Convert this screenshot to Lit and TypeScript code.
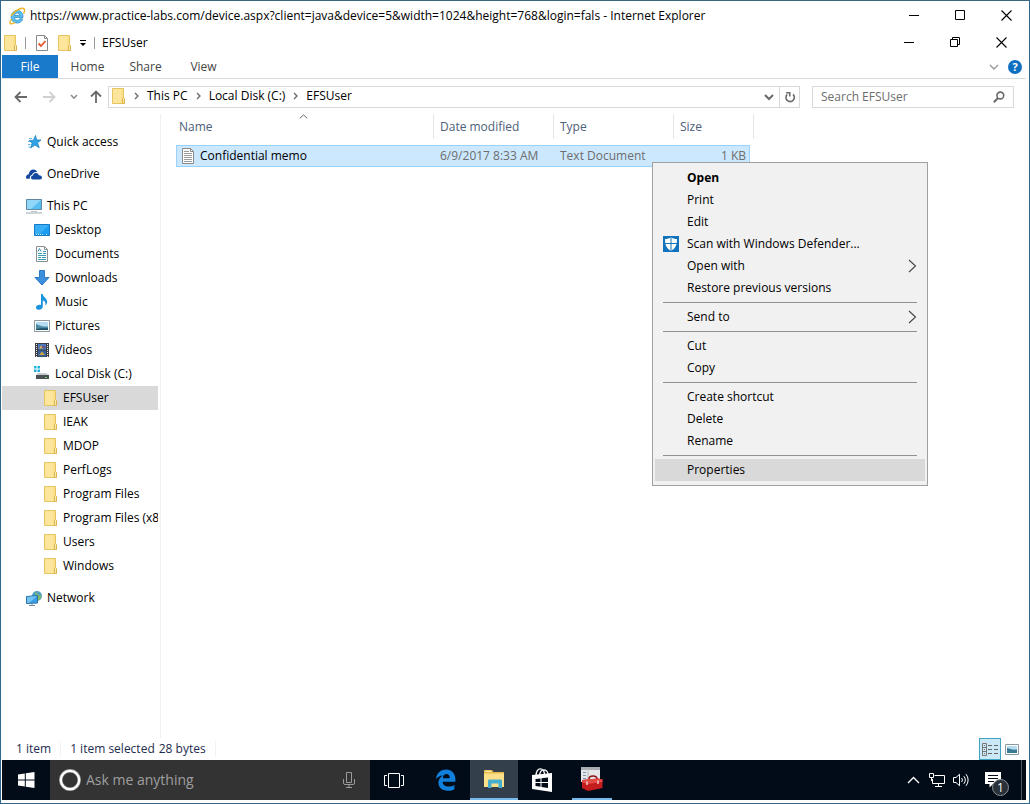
import { LitElement, html, css, svg, nothing, type TemplateResult } from "lit";
import { customElement } from "lit/decorators.js";
import { classMap } from "lit/directives/class-map.js";

const icon = (w: number, h: number, body: TemplateResult) =>
  html`<svg class="icon" width=${w} height=${h} viewBox="0 0 ${w} ${h}" fill="none" aria-hidden="true">${body}</svg>`;

const folder = () => icon(16, 16, svg`
  <path d="M2.5 .5H13.5V9.5L14.5 10.5V15.5H2.5Z" fill="#fbe08c" stroke="#e6c460"/>
  <path d="M3 1H11V15H3Z" fill="#fde69c"/>
  <path d="M12.5 15.5V10.5L13.5 9.5L14.5 10.5V15.5Z" fill="#ffeeb0" stroke="#dcb34c"/>`);

const textFile = () => icon(14, 16, svg`
  <path d="M1.5 .5H9.5L12.5 3.5V15.5H1.5Z" fill="#fff" stroke="#8a8a8a"/>
  <path d="M9.5 .5V3.5H12.5" stroke="#8a8a8a"/>
  <path d="M3 5.5H11M3 7.5H11M3 9.5H11M3 11.5H11M3 13.5H11M3 3.5H8" stroke="#9a9a9a"/>`);

const star = () => icon(16, 16, svg`
  <path d="M9.5 1.5L10.6 6H15L11.5 8.8L13.2 13.8L9 11L4.6 14L6.2 9L3 6.4H7.4Z" fill="#2ea3e6" stroke="#1d82c4" stroke-width=".8"/>
  <path d="M3 4.5H6M2 7.5H4M2 10.5H4.5M2.5 13H4" stroke="#5db8ec"/>`);

const cloud = () => icon(16, 16, svg`
  <path d="M0 11.5C0 9.5 1.3 8.4 2.8 8.3C3 5.5 5 3.6 7.4 3.6C9.2 3.6 10.6 4.6 11.3 6C8.6 5.6 6.6 7 6 9C4.4 9.2 3.4 10.6 3.9 12.8H1.6C.6 12.8 0 12.3 0 11.5Z" fill="#1448a0"/>
  <path d="M5 11.6C5 10.4 5.8 9.8 6.8 9.8C7 8 8.2 6.9 9.9 6.9C11.4 6.9 12.5 7.8 12.8 9.2C14.6 9 16 10 16 11.6C16 12.8 15.2 13.6 14 13.6H7C5.7 13.6 5 12.8 5 11.6Z" fill="#1448a0"/>`);

const pc = () => icon(16, 16, svg`
  <path d="M.5 1.5H15.5V11.5H.5Z" fill="#58bdf0" stroke="#5f87a3"/>
  <path d="M1 2H15L5 11H1Z" fill="#8fd6f8"/>
  <path d="M5 13.5H11" stroke="#b7c3cc"/><path d="M0 15H16" stroke="#9aa9b4"/>`);

const desktop = () => icon(16, 16, svg`
  <path d="M.5 2.5H15.5V13.5H.5Z" fill="#1a9df0" stroke="#1679c8"/>
  <path d="M1 3H15L6 12H1Z" fill="#38aef5"/>
  <path d="M2 12.5H10M12 12.5H14" stroke="#c7e8fb" stroke-dasharray="1 1"/>`);

const documents = () => icon(16, 16, svg`
  <path d="M2.5 .5H10.5L13.5 3.5V15.5H2.5Z" fill="#fff" stroke="#8a8f93"/>
  <path d="M10.5 .5V3.5H13.5" stroke="#8a8f93"/>
  <path d="M4 5.5L5.5 2.5L7 5.5M9 5.5H12M4 7.5H8M9 7.5H12M4 9.5H12M4 11.5H7M8 11.5H12M4 13.5H12" stroke="#3a9cba"/>`);

const downloads = () => icon(16, 16, svg`
  <path d="M5.5 .5H10.5V7.5H15L8 15L1 7.5H5.5Z" fill="#3b8fdd" stroke="#2c7ac4"/>`);

const music = () => icon(16, 16, svg`
  <path d="M7 0H8.6C9 3 13.4 4.4 13.2 8C13.1 9.6 12.4 10.6 11.4 11.4C12 8.6 10.8 7.2 8.8 6.6V12.6C8.8 14.6 7 15.8 5 15.8C3.2 15.8 2 14.8 2 13.4C2 11.6 4.6 10.2 7 11Z" fill="#1c93dd"/>`);

const picture = () => icon(16, 16, svg`
  <path d="M.5 2.5H15.5V13.5H.5Z" fill="#fff" stroke="#8c98a0"/>
  <path d="M2 4H14V12H2Z" fill="#b4dcf2"/>
  <path d="M2 6C5 7 7 9 14 8.5V12H2Z" fill="#4c8aa4"/>
  <path d="M2 11C7 9.5 10 10.5 14 10V12H2Z" fill="#1e4f66"/>`);

const video = () => icon(16, 16, svg`
  <path d="M1 1H15V15H1Z" fill="#3b3f45"/>
  <path d="M2.5 2V15M13.5 2V15" stroke="#e8e8e8" stroke-dasharray="1 1"/>
  <path d="M4 2H12V7.5H4Z" fill="#4a78b8"/><path d="M4 8.5H12V14.5H4Z" fill="#35619c"/>
  <path d="M5 6.5L7 3.5L9 6.5Z" fill="#d5b54a"/><path d="M8 4H11V6H8Z" fill="#7e4a86"/>
  <path d="M5 13L8 9.5L11 13Z" fill="#c9a53e"/>`);

const drive = () => icon(16, 16, svg`
  <path d="M0 0H2.5V2.5H0ZM3.5 0H6V2.5H3.5ZM0 3.5H2.5V6H0ZM3.5 3.5H6V6H3.5Z" fill="#1fb0dc"/>
  <path d="M2 9L4 7H12L15 9Z" fill="#c6cbce"/><path d="M2 9H15V13H2Z" fill="#4a5053"/>
  <path d="M11 11.5H13" stroke="#58d84a"/>`);

const network = () => icon(16, 16, svg`
  <circle cx="11" cy="6" r="5" fill="#4e9fc4"/>
  <path d="M9 2C12 3 12 6 15.5 5.5C15 9 13 10.6 11 11Z" fill="#80b86a"/>
  <path d="M.5 6.5L11.5 5.5V13L.5 13.5Z" fill="#3aa0e6" stroke="#2a6fa8"/>
  <path d="M1 7L11 6L3 13H1Z" fill="#74c2f2"/><path d="M3 15.5H9M6 13.5V15" stroke="#6c8ca4"/>`);

const ie = () => icon(18, 18, svg`
  <path d="M14.6 11.8H11.6C11.2 12.8 10.4 13.3 9.3 13.3C7.6 13.3 6.6 12.2 6.5 10.4H15C15.2 6.4 13 3.6 9.4 3.6C5.9 3.6 3.2 6.2 3.2 9.9C3.2 13.5 5.7 16 9.2 16C12 16 13.9 14.5 14.6 11.8ZM6.6 8.4C6.8 6.9 7.8 6 9.2 6C10.7 6 11.6 6.9 11.7 8.4Z" fill="#5cc0f0" stroke="#2a8cc8" stroke-width=".8"/>
  <path d="M3.6 12.2C1.4 15.2 1.4 17 3.4 16.8C4.8 16.7 6.2 16 7.2 15.4" stroke="#e9b62c" stroke-width="1.4"/>
  <path d="M3.2 9C5 5.6 9.6 1.8 13.8 1.2C17 .8 17.4 3.4 15.6 6.6" stroke="#e9b62c" stroke-width="1.5"/>`);

const checkDoc = () => icon(16, 16, svg`
  <path d="M3.5 .5H11.5L14.5 3.5V15.5H3.5Z" fill="#fff" stroke="#8a8a8a"/>
  <path d="M11.5 .5V3.5H14.5" stroke="#8a8a8a"/>
  <path d="M5.5 8.5L8 11L12.5 6" stroke="#e0562a" stroke-width="1.8"/>`);

const customize = () => icon(8, 8, svg`<path d="M1 1.5H7" stroke="#000"/><path d="M1 4H7L4 7Z" fill="#000"/>`);
const minimize = () => icon(11, 11, svg`<path d="M0 5.5H10" stroke="#000"/>`);
const maximize = () => icon(11, 11, svg`<path d="M.5 .5H9.5V9.5H.5Z" stroke="#000"/>`);
const restore = () => icon(11, 11, svg`<path d="M.5 2.5H7.5V9.5H.5ZM2.5 2.5V.5H9.5V7.5H7.5" stroke="#000"/>`);
const close = () => icon(11, 11, svg`<path d="M.5 .5L10.5 10.5M10.5 .5L.5 10.5" stroke="#000" stroke-width="1.1"/>`);

const arrow = (color: string, d: string) => icon(14, 14, svg`<path d=${d} stroke=${color} stroke-width="1.8"/>`);
const back = "M13 7H2M6.5 2L1.5 7L6.5 12";
const forward = "M1 7H12M7.5 2L12.5 7L7.5 12";
const up = "M7 13V2M2 6.5L7 1.5L12 6.5";
const smallDown = (color: string) => icon(8, 6, svg`<path d="M1 1L4 4.2L7 1" stroke=${color} stroke-width="1.5"/>`);
const wideDown = (color: string, width: number) => icon(10, 8, svg`<path d="M1 2L5 6L9 2" stroke=${color} stroke-width=${width}/>`);
const crumb = () => icon(5, 8, svg`<path d="M1 1L4 4L1 7" stroke="#666" stroke-width="1.3"/>`);
const refresh = () => icon(12, 12, svg`
  <path d="M9 3.3A4.2 4.2 0 1 1 3.2 3.4" stroke="#6a6a6a" stroke-width="1.6"/>
  <path d="M2.2 1.8H5.8V5.6" stroke="#6a6a6a" stroke-width="1.5"/>`);
const magnifier = () => icon(12, 12, svg`
  <circle cx="7.3" cy="4.5" r="3.4" stroke="#6a6a6a" stroke-width="1.6"/><path d="M5 7L.8 11.2" stroke="#6a6a6a" stroke-width="2"/>`);
const help = () => html`<span class="help">?</span>`;
const defender = () => icon(16, 16, svg`
  <path d="M0 0H16V16H0Z" fill="#1172bd"/>
  <path d="M8 1.2C9.5 2.4 11.5 3 14 3C14 8.5 13 12 8 15C3 12 2 8.5 2 3C4.5 3 6.5 2.4 8 1.2Z" fill="#fff"/>
  <path d="M8 1V15M2 7.5H14" stroke="#1172bd"/>`);
const submenu = () => icon(9, 14, svg`<path d="M1 1L7.5 7L1 13" stroke="#444" stroke-width="1.1"/>`);
const sortUp = () => icon(9, 5, svg`<path d="M.8 4.3L4.5 .9L8.2 4.3" stroke="#666"/>`);

const winLogo = () => icon(17, 16, svg`
  <path d="M0 2.4L6.8 1.4V7.5H0ZM7.8 1.2L16.5 0V7.5H7.8ZM0 8.5H6.8V14.6L0 13.6ZM7.8 8.5H16.5V16L7.8 14.8Z" fill="#fff"/>`);
const cortana = () => icon(22, 22, svg`
  <circle cx="11" cy="11" r="9.2" stroke="#9c9c9c" stroke-width="3.4"/>
  <circle cx="11" cy="11" r="9.2" stroke="#fff" stroke-width="2.2"/>`);
const mic = () => icon(12, 16, svg`
  <path d="M3.5 .5H8.5V10.5H3.5ZM.5 7V11Q.5 12.5 2 12.5H10Q11.5 12.5 11.5 11V7M6 12.5V15.5M3 15.5H9" stroke="#9a9a9a"/>`);
const taskView = () => icon(20, 15, svg`
  <path d="M4.5 .5H15.5V14.5H4.5ZM3 2.5H.5V12.5H3M17 2.5H19.5V12.5H17" stroke="#fff"/>`);
const edge = () => icon(22, 22, svg`
  <path d="M1 10.2C1.6 4.6 5.4 .6 11 .6C17 .6 20.4 5 20.4 10.4V12.8H7.6C7.8 16 10.4 17.6 13.6 17.6C16 17.6 17.8 17 19.4 16V20.2C17.6 21.2 15.4 21.8 12.6 21.8C7 21.8 3.4 18.6 3.4 13.6C3.4 10.4 5.2 7.8 8 6.4C4.8 6.6 2.6 8 1 10.2ZM7.8 9.2H14.8C14.8 6.6 13.6 5 11.4 5C9.2 5 8 7 7.8 9.2Z" fill="#1180dc"/>`);
const explorer = () => icon(22, 20, svg`
  <path d="M1 1H9L10.5 3H21V18H1Z" fill="#e6b94e"/><path d="M1 4.5H21V18H1Z" fill="#fbe08a"/>
  <path d="M2.5 2.3H8" stroke="#fff3c6"/>
  <path d="M5 19V12C5 11 5.6 10.5 6.5 10.5H17.5C18.4 10.5 19 11 19 12V19H15.5V14.5H8.5V19Z" fill="#48aece"/>`);
const store = () => icon(22, 24, svg`
  <path d="M1 7L21 5V24L1 21Z" fill="#fff"/>
  <path d="M5 8C5 3 7 .8 9.4 .8S13.4 3 13.6 7M8.5 7.5C9 3.4 10.6 1.8 12.8 1.8S16.6 3.6 17 6" stroke="#fff" stroke-width="1.3"/>
  <path d="M4.5 11L9.5 10.4V14H4.5ZM10.5 10.2L17 9.4V14H10.5ZM4.5 15H9.5V18.8L4.5 18.1ZM10.5 15H17V20L10.5 19Z" fill="#020c18"/>`);
const toolbox = () => icon(22, 24, svg`
  <path d="M0 0H19V15H0Z" fill="#e4e6e8"/><path d="M0 0H19V3H0Z" fill="#a9adb2"/>
  <path d="M2 5.5H5M2 8.5H5M2 11.5H5" stroke="#7b96b8"/><path d="M7 4V14" stroke="#b5b9bd"/>
  <path d="M8 12C8 9.4 9.4 9 12 9C14.6 9 16 9.4 16 12" stroke="#8e1414" stroke-width="1.6"/>
  <path d="M1 13L17 11.5L21.5 12.5V21L7 24L1 21Z" fill="#c41d1d"/>
  <path d="M1 13L17 11.5L21.5 12.5V15L7 17L1 15.5Z" fill="#e24a44"/>
  <path d="M6 14.5V18M17 13.5V17" stroke="#f0d8d8" stroke-width="1.4"/>`);
const trayUp = () => icon(13, 8, svg`<path d="M1 7L6.5 1.5L12 7" stroke="#fff" stroke-width="1.4"/>`);
const trayNet = () => icon(17, 15, svg`
  <path d="M5.5 2.5H15.5V10.5H3.5V6" stroke="#fff"/><path d="M.5 .5H4.5V4.5H.5ZM2.5 4.5V8" stroke="#fff"/>
  <path d="M9.5 10.5V13.5M6 13.5H13" stroke="#fff"/>`);
const traySound = () => icon(17, 14, svg`
  <path d="M.5 4.5H3L6.5 1.3V12.7L3 9.5H.5Z" stroke="#fff"/>
  <path d="M8.6 5A3 3 0 0 1 8.6 9M10.8 3.2A6 6 0 0 1 10.8 10.8M13 1.2A9 9 0 0 1 13 12.8" stroke="#fff"/>`);
const bubble = () => icon(17, 16, svg`
  <path d="M0 0H16V12H8L4.5 15.5V12H0Z" fill="#fff"/><path d="M3 3.5H13M3 6.5H13M3 9.5H9" stroke="#020c18"/>`);
const detailsView = () => icon(17, 13, svg`
  <path d="M.5 .5H4.5V12.5H.5ZM.5 4.5H4.5M.5 8.5H4.5M2 2.5H3M2 6.5H3M2 10.5H3" stroke="#777"/>
  <path d="M6 2.5H10M12 2.5H16M6 6.5H10M12 6.5H16M6 10.5H10M12 10.5H16" stroke="#666"/>`);
const iconsView = () => icon(14, 11, svg`
  <path d="M.5 .5H13.5V10.5H.5Z" fill="#fff" stroke="#8c98a0"/><path d="M2 2H12V9H2Z" fill="#b4dcf2"/>
  <path d="M2 4C5 5 7 6 12 5.5V9H2Z" fill="#3b7a94"/>`);

interface TreeItem { label: string; level: number; icon: () => TemplateResult; selected?: boolean; gap?: boolean }

const tree: TreeItem[] = [
  { label: "Quick access", level: 0, icon: star },
  { label: "OneDrive", level: 0, icon: cloud, gap: true },
  { label: "This PC", level: 0, icon: pc, gap: true },
  { label: "Desktop", level: 1, icon: desktop },
  { label: "Documents", level: 1, icon: documents },
  { label: "Downloads", level: 1, icon: downloads },
  { label: "Music", level: 1, icon: music },
  { label: "Pictures", level: 1, icon: picture },
  { label: "Videos", level: 1, icon: video },
  { label: "Local Disk (C:)", level: 1, icon: drive },
  { label: "EFSUser", level: 2, icon: folder, selected: true },
  { label: "IEAK", level: 2, icon: folder },
  { label: "MDOP", level: 2, icon: folder },
  { label: "PerfLogs", level: 2, icon: folder },
  { label: "Program Files", level: 2, icon: folder },
  { label: "Program Files (x86)", level: 2, icon: folder },
  { label: "Users", level: 2, icon: folder },
  { label: "Windows", level: 2, icon: folder },
  { label: "Network", level: 0, icon: network, gap: true },
];

interface MenuItem { label: string; bold?: boolean; icon?: () => TemplateResult; sub?: boolean; hot?: boolean }

const menu: MenuItem[][] = [
  [
    { label: "Open", bold: true },
    { label: "Print" },
    { label: "Edit" },
    { label: "Scan with Windows Defender...", icon: defender },
    { label: "Open with", sub: true },
    { label: "Restore previous versions" },
  ],
  [{ label: "Send to", sub: true }],
  [{ label: "Cut" }, { label: "Copy" }],
  [{ label: "Create shortcut" }, { label: "Delete" }, { label: "Rename" }],
  [{ label: "Properties", hot: true }],
];

const base = css`
  * { box-sizing: border-box; }
  .icon { display: block; flex: none; }
  button, input { font: inherit; color: inherit; border: 0; background: none; padding: 0; margin: 0; border-radius: 0; }
  button { display: flex; align-items: center; justify-content: center; white-space: nowrap; }
  a { color: inherit; text-decoration: none; }
`;

@customElement("folder-tree")
class FolderTree extends LitElement {
  static styles = [base, css`
    :host { display: block; padding: 16px 2px 0 0; border-right: 1px solid #f0f0f0; overflow: hidden; }
    .item { display: flex; align-items: center; gap: 5px; height: 24px; padding-left: 24px; overflow: hidden; white-space: nowrap; }
    .level1 { padding-left: 32px; }
    .level2 { padding-left: 40px; }
    .gap { margin-top: 8px; }
    .selected { background: #d9d9d9; }
  `];
  render() {
    return html`<nav aria-label="Folders">${tree.map((t) => html`
      <a href="#" class=${classMap({ item: true, level1: t.level === 1, level2: t.level === 2, gap: !!t.gap, selected: !!t.selected })}>
        ${t.icon()}<span>${t.label}</span></a>`)}</nav>`;
  }
}

@customElement("context-menu")
class ContextMenu extends LitElement {
  static styles = [base, css`
    :host { display: block; width: 276px; padding: 4px 2px; border: 1px solid #a0a0a0; background: #f1f1f1; color: #000; }
    .item { display: grid; grid-template-columns: 24px 1fr 9px; width: 100%; height: 22px; padding: 0 8px; text-align: left; }
    .bold { font-weight: 700; }
    .hot { background: #d9d9d9; }
    hr { margin: 3px 8px; border: 0; border-top: 1px solid #919191; }
  `];
  render() {
    return html`<div role="menu">${menu.map((group, i) => html`
      ${i ? html`<hr>` : nothing}
      ${group.map((m) => html`
        <button role="menuitem" class=${classMap({ item: true, bold: !!m.bold, hot: !!m.hot })}>
          <span>${m.icon ? m.icon() : nothing}</span><span>${m.label}</span>${m.sub ? submenu() : nothing}
        </button>`)}`)}</div>`;
  }
}

@customElement("task-bar")
class TaskBar extends LitElement {
  static styles = [base, css`
    :host { display: flex; height: 40px; background: #020c18; color: #fff; }
    .start { width: 48px; }
    .ask { display: flex; align-items: center; width: 320px; gap: 5px; padding: 0 15px 0 9px; background: #333; }
    .ask input { flex: 1; min-width: 0; height: 24px; font-size: 14px; line-height: 24px; outline: 0; }
    .ask input::placeholder { color: #9f9f9f; opacity: 1; }
    .app { width: 48px; }
    .view { margin-right: 4px; }
    .active { background: #333f4a; border-bottom: 2px solid #76b9ed; }
    .running { width: 40px; margin-left: 6px; border-bottom: 2px solid #76b9ed; }
    .tray { display: flex; margin-left: auto; }
    .tray button { width: 24px; }
    .tray .notify { position: relative; width: 48px; padding-right: 8px; }
    .badge { position: absolute; left: 19px; top: 19px; width: 17px; height: 17px; border: 1px solid #8b9299; border-radius: 50%; background: #2a3138; font-size: 12px; line-height: 15px; }
    .tray .peek { width: 5px; border-left: 1px solid #4f5861; }
  `];
  render() {
    return html`
      <button class="start" aria-label="Start">${winLogo()}</button>
      <div class="ask">${cortana()}<input aria-label="Ask me anything" placeholder="Ask me anything">${mic()}</div>
      <button class="app view" aria-label="Task view">${taskView()}</button>
      <button class="app" aria-label="Edge">${edge()}</button>
      <button class="app active" aria-label="File Explorer">${explorer()}</button>
      <button class="app" aria-label="Store">${store()}</button>
      <button class="app running" aria-label="Server Manager">${toolbox()}</button>
      <div class="tray">
        <button aria-label="Hidden icons">${trayUp()}</button>
        <button aria-label="Network">${trayNet()}</button>
        <button aria-label="Volume">${traySound()}</button>
        <button class="notify" aria-label="Notifications">${bubble()}<span class="badge">1</span></button>
        <button class="peek" aria-label="Show desktop"></button>
      </div>`;
  }
}

@customElement("app-root")
class AppRoot extends LitElement {
  static styles = [base, css`
    :host { display: flex; flex-direction: column; position: relative; box-sizing: border-box; height: 100vh; padding: 0 3px 3px 1px; border: 1px solid #2f678c; border-top-color: #3a6680; background: #fff; color: #000; font: 12px/16px "Open Sans", "Noto Sans", sans-serif; overflow: hidden; }
    .bar { display: flex; align-items: center; flex: none; white-space: nowrap; }
    .browser { height: 29px; padding-left: 6px; gap: 4px; }
    .title { font: inherit; margin: 0; flex: 1; min-width: 0; overflow: hidden; }
    .window-buttons { display: flex; }
    .window-buttons button { width: 46px; height: 24px; }
    .window { height: 25px; gap: 7px; padding-right: 2px; }
    .browser .window-buttons { margin-right: -3px; }
    .line { width: 1px; height: 12px; background: #999; }
    .tabs { height: 24px; gap: 1px; border-bottom: 1px solid #d9dadb; color: #444; }
    .tabs .tab { width: 57px; height: 23px; }
    .tabs .file { width: 56px; background: #1979ca; color: #fff; }
    .right { display: flex; gap: 9px; margin-left: auto; padding-right: 4px; align-items: center; }
    .help { width: 14px; height: 14px; border-radius: 50%; background: #0f6fc0; color: #fff; font-weight: 700; font-size: 11px; line-height: 14px; text-align: center; }
    .address { height: 35px; padding: 0 12px; gap: 12px; }
    .nav { display: flex; gap: 14px; align-items: center; width: 82px; }
    .nav button { flex: none; }
    .nav .recent { margin: 0 -3px 0 0; }
    .path { display: flex; align-items: center; flex: 1; min-width: 0; height: 22px; border: 1px solid #d9d9d9; }
    .crumbs { display: flex; align-items: center; flex: 1; gap: 8px; padding: 0 0 2px 1px; }
    .path button { width: 20px; height: 20px; }
    .path .reload { border-left: 1px solid #d9d9d9; }
    .search { display: flex; align-items: center; width: 202px; height: 22px; padding: 0 8px; border: 1px solid #d9d9d9; color: #6d6d6d; }
    .search input { flex: 1; min-width: 0; outline: 0; }
    .search input::placeholder { color: #6d6d6d; opacity: 1; }
    .body { display: grid; grid-template-columns: 159px 1fr; flex: 1; min-height: 0; }
    .files { padding-left: 15px; overflow: hidden; }
    table { table-layout: fixed; width: 578px; border-spacing: 0; }
    .c-name { width: 258px; } .c-col { width: 120px; } .c-size { width: 76px; } .c-end { width: 4px; }
    th { height: 31px; padding: 0 0 6px; font-weight: 400; text-align: left; color: #4c607a; vertical-align: top; }
    .head { position: relative; display: flex; align-items: center; height: 25px; padding-left: 6px; border-right: 1px solid #e5e5e5; }
    .head.last { border-right: 0; }
    .end { padding: 0; vertical-align: top; }
    .end .head { padding-left: 0; }
    .first .head { padding-left: 3px; }
    .sort { position: absolute; left: 123px; top: 0; }
    .row td { height: 22px; padding: 0 0 0 6px; background: #cce8ff; border: solid #99d1ff; border-width: 1px 0; color: #6d6d6d; }
    .row td:first-child { border-left-width: 1px; padding-left: 4px; color: #000; }
    .row .size { border-right-width: 1px; padding-right: 3px; text-align: right; }
    .row .blank { background: none; border: 0; padding: 0; }
    .name { display: flex; align-items: center; gap: 5px; }
    .status { height: 22px; padding: 0 0 0 14px; gap: 9px; color: #1e2d50; }
    .status .divided { padding-right: 9px; border-right: 1px solid #f2f2f2; }
    .selection { display: flex; gap: 4px; }
    .views { display: flex; margin-left: auto; gap: 4px; padding-right: 7px; }
    .views button { height: 22px; }
    .views .on { width: 22px; border: 1px solid #3fa3c4; background: #cbe8f6; }
    .popup { position: absolute; left: 651px; top: 161px; }
  `];
  render() {
    return html`
      <header class="bar browser">${ie()}
        <h1 class="title">https://www.practice-labs.com/device.aspx?client=java&amp;device=5&amp;width=1024&amp;height=768&amp;login=fals - Internet Explorer</h1>
        <div class="window-buttons">
          <button aria-label="Minimize">${minimize()}</button><button aria-label="Maximize">${maximize()}</button><button aria-label="Close">${close()}</button>
        </div>
      </header>
      <div class="bar window">
        ${folder()}<span class="line"></span>
        ${checkDoc()}${folder()}${customize()}<span class="line"></span>
        <h2 class="title">EFSUser</h2>
        <div class="window-buttons">
          <button aria-label="Minimize window">${minimize()}</button><button aria-label="Restore window">${restore()}</button><button aria-label="Close window">${close()}</button>
        </div>
      </div>
      <nav class="bar tabs">
        <button class="tab file">File</button><button class="tab">Home</button><button class="tab">Share</button><button class="tab">View</button>
        <div class="right"><button aria-label="Expand ribbon">${wideDown("#999", 1.4)}</button><button aria-label="Help">${help()}</button></div>
      </nav>
      <div class="bar address">
        <div class="nav">
          <button aria-label="Back">${arrow("#6a6a6a", back)}</button><button aria-label="Forward">${arrow("#d0d0d0", forward)}</button>
          <button class="recent" aria-label="Recent">${smallDown("#888")}</button><button aria-label="Up">${arrow("#6a6a6a", up)}</button>
        </div>
        <div class="path">
          <div class="crumbs">${folder()}${["This PC", "Local Disk (C:)", "EFSUser"].map((c) => html`${crumb()}<a href="#">${c}</a>`)}</div>
          <button aria-label="Previous locations">${wideDown("#6a6a6a", 2)}</button>
          <button class="reload" aria-label="Refresh">${refresh()}</button>
        </div>
        <label class="search"><input aria-label="Search EFSUser" placeholder="Search EFSUser">${magnifier()}</label>
      </div>
      <div class="body">
        <folder-tree></folder-tree>
        <main class="files">
          <table>
            <colgroup><col class="c-name"><col class="c-col"><col class="c-col"><col class="c-size"><col class="c-end"></colgroup>
            <thead><tr>
              <th class="first"><div class="head">Name<span class="sort">${sortUp()}</span></div></th>
              <th><div class="head">Date modified</div></th><th><div class="head">Type</div></th>
              <th><div class="head last">Size</div></th><td class="end"><div class="head"></div></td>
            </tr></thead>
            <tbody><tr class="row">
              <td><span class="name">${textFile()}Confidential memo</span></td>
              <td>6/9/2017 8:33 AM</td><td>Text Document</td><td class="size">1 KB</td><td class="blank"></td>
            </tr></tbody>
          </table>
        </main>
      </div>
      <footer class="bar status">
        <span class="divided">1 item</span>
        <span class="selection divided"><span>1 item selected</span><span>28 bytes</span></span>
        <div class="views"><button class="on" aria-label="Details view">${detailsView()}</button><button aria-label="Large icons">${iconsView()}</button></div>
      </footer>
      <task-bar></task-bar>
      <context-menu class="popup"></context-menu>`;
  }
}
